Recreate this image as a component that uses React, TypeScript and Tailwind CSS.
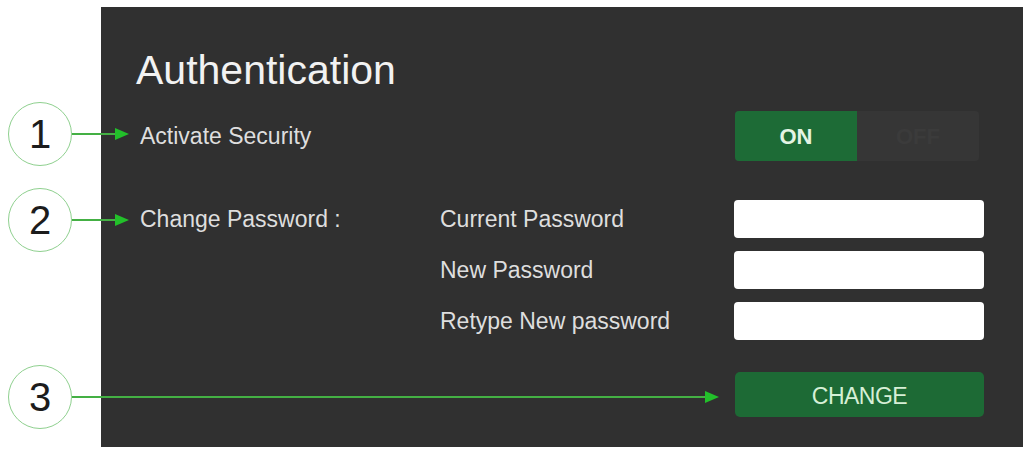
import type { ReactNode } from "react";

const fields = ["Current Password", "New Password", "Retype New password"];

function Callout({ n, className, lineClass }: { n: number; className: string; lineClass: string }) {
  return (
    <div className={`absolute left-[8px] flex items-center ${className}`}>
      <div className="flex h-[64px] w-[64px] items-center justify-center rounded-full border-[1.5px] border-[#8fd08f] bg-white text-[40px] leading-none text-[#1c1c1c]">
        {n}
      </div>
      <div className={`h-[2px] bg-[#44b044] ${lineClass}`} />
      <svg width="14" height="12" viewBox="0 0 14 12" className="-ml-px">
        <path d="M0 0 L14 6 L0 12 Z" fill="#22c02a" />
      </svg>
    </div>
  );
}

function Label({ children, className = "" }: { children: ReactNode; className?: string }) {
  return <div className={`text-[23px] leading-none text-[#dedede] ${className}`}>{children}</div>;
}

export default function App() {
  return (
    <div className="relative h-[451px] w-[1029px] overflow-hidden bg-white pl-[101px] pt-[7px] font-['Liberation_Sans',Arial,sans-serif]">
      <section className="h-[440px] w-[922px] bg-[#303030] pl-[35px] pr-[39px] pt-[43px]">
        <h1 className="text-[41px] leading-[40px] font-normal text-[#f2f2f2]">Authentication</h1>

        {/* security switch */}
        <div className="mt-[21px] flex h-[50px] items-center justify-between">
          <Label className="pl-[4px]">Activate Security</Label>
          <div className="mr-[5px] flex h-[50px] w-[244px] overflow-hidden rounded-[4px] bg-[#363636]">
            <div className="flex w-[122px] items-center justify-center bg-[#1d6b36] text-[22px] font-bold text-[#e4f4e4]">ON</div>
            <div className="flex flex-1 items-center justify-center text-[22px] font-bold text-[#3b3b3b]">OFF</div>
          </div>
        </div>

        {/* password form */}
        <div className="mt-[39px] grid grid-cols-[303px_295px_250px] gap-y-[13px]">
          {fields.map((f, i) => (
            <div key={f} className="contents">
              <div className="flex h-[38px] items-center">
                {i === 0 && <Label className="pl-[4px]">Change Password :</Label>}
              </div>
              <div className="flex h-[38px] items-center">
                <Label className="pl-[1px]">{f}</Label>
              </div>
              <input type="password" className="h-[38px] w-[250px] rounded-[4px] bg-white outline-none" />
            </div>
          ))}
        </div>

        <div className="mt-[32px] flex justify-end">
          <button className="h-[45px] w-[249px] rounded-[5px] bg-[#1d6a35] pt-[3px] text-[23px] tracking-[-0.5px] text-[#d6efd6]">
            CHANGE
          </button>
        </div>
      </section>

      <Callout n={1} className="top-[102px]" lineClass="w-[44px]" />
      <Callout n={2} className="top-[188px]" lineClass="w-[44px]" />
      <Callout n={3} className="top-[365px]" lineClass="w-[634px]" />
    </div>
  );
}
